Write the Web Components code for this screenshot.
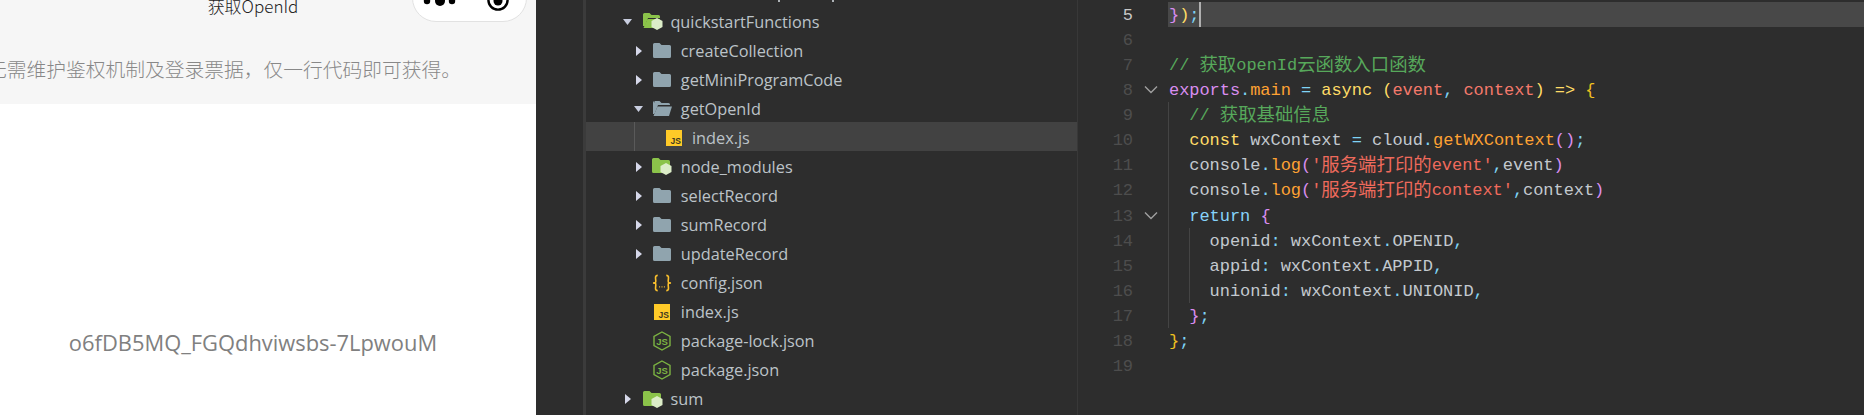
<!DOCTYPE html>
<html>
<head>
<meta charset="utf-8">
<style>
  html, body { margin: 0; padding: 0; width: 1864px; height: 415px; overflow: hidden; background: #2d2d2d; }
  .cm { color: #57a85b; }
  .pu { color: #d98df0; }
  .cy { color: #7fd4f5; }
  .or { color: #ffa233; }
  .ye { color: #ffdc66; }
  .re { color: #f4796b; }
  .st { color: #ef6a5c; }
  .tx { color: #c3c9cf; }
  .bl { color: #86d3fa; }
  .br { color: #f0c020; }
  .cn { font-family: "Noto Sans CJK SC", sans-serif; font-size: 18.4px; line-height: 0; letter-spacing: 0; vertical-align: -1px; }
</style>
</head>
<body>
<shot-root>
  <mini-preview></mini-preview>
  <file-tree>
    <tree-row cut></tree-row>
    <tree-row level="0" arrow="down" icon="node-open">quickstartFunctions</tree-row>
    <tree-row level="1" arrow="right" icon="folder">createCollection</tree-row>
    <tree-row level="1" arrow="right" icon="folder">getMiniProgramCode</tree-row>
    <tree-row level="1" arrow="down" icon="folder-open">getOpenId</tree-row>
    <tree-row level="2" icon="js" selected>index.js</tree-row>
    <tree-row level="1" arrow="right" icon="node">node_modules</tree-row>
    <tree-row level="1" arrow="right" icon="folder">selectRecord</tree-row>
    <tree-row level="1" arrow="right" icon="folder">sumRecord</tree-row>
    <tree-row level="1" arrow="right" icon="folder">updateRecord</tree-row>
    <tree-row level="1" icon="json">config.json</tree-row>
    <tree-row level="1" icon="js">index.js</tree-row>
    <tree-row level="1" icon="npm">package-lock.json</tree-row>
    <tree-row level="1" icon="npm">package.json</tree-row>
    <tree-row level="0" arrow="right" icon="node">sum</tree-row>
  </file-tree>
  <code-editor>
    <code-line n="5" current><span class="pu">}</span><span class="ye">)</span><span class="cy">;</span></code-line>
    <code-line n="6"></code-line>
    <code-line n="7"><span class="cm">// <span class="cn">获取</span>openId<span class="cn">云函数入口函数</span></span></code-line>
    <code-line n="8" fold><span class="pu">exports</span><span class="cy">.</span><span class="or">main</span> <span class="cy">=</span> <span class="ye">async</span> <span class="ye">(</span><span class="re">event</span><span class="cy">,</span> <span class="re">context</span><span class="ye">)</span> <span class="ye">=&gt;</span> <span class="br">{</span></code-line>
    <code-line n="9" guides="1">  <span class="cm">// <span class="cn">获取基础信息</span></span></code-line>
    <code-line n="10" guides="1">  <span class="ye">const</span> <span class="tx">wxContext</span> <span class="cy">=</span> <span class="tx">cloud</span><span class="cy">.</span><span class="or">getWXContext</span><span class="pu">()</span><span class="cy">;</span></code-line>
    <code-line n="11" guides="1">  <span class="tx">console</span><span class="cy">.</span><span class="or">log</span><span class="pu">(</span><span class="st">'<span class="cn">服务端打印的</span>event'</span><span class="cy">,</span><span class="tx">event</span><span class="pu">)</span></code-line>
    <code-line n="12" guides="1">  <span class="tx">console</span><span class="cy">.</span><span class="or">log</span><span class="pu">(</span><span class="st">'<span class="cn">服务端打印的</span>context'</span><span class="cy">,</span><span class="tx">context</span><span class="pu">)</span></code-line>
    <code-line n="13" guides="1" fold>  <span class="bl">return</span> <span class="pu">{</span></code-line>
    <code-line n="14" guides="2">    <span class="tx">openid</span><span class="cy">:</span> <span class="tx">wxContext</span><span class="cy">.</span><span class="tx">OPENID</span><span class="cy">,</span></code-line>
    <code-line n="15" guides="2">    <span class="tx">appid</span><span class="cy">:</span> <span class="tx">wxContext</span><span class="cy">.</span><span class="tx">APPID</span><span class="cy">,</span></code-line>
    <code-line n="16" guides="2">    <span class="tx">unionid</span><span class="cy">:</span> <span class="tx">wxContext</span><span class="cy">.</span><span class="tx">UNIONID</span><span class="cy">,</span></code-line>
    <code-line n="17" guides="1">  <span class="pu">}</span><span class="cy">;</span></code-line>
    <code-line n="18"><span class="br">}</span><span class="cy">;</span></code-line>
    <code-line n="19"></code-line>
  </code-editor>
</shot-root>

<script>
class ShotRoot extends HTMLElement {
  constructor() {
    super();
    this.attachShadow({ mode: 'open' }).innerHTML = `
      <style>
        :host { display: flex; width: 1864px; height: 415px; overflow: hidden; background: #2d2d2d; }
        ::slotted(mini-preview) { flex: 0 0 536px; }
      </style>
      <slot></slot>`;
  }
}

class MiniPreview extends HTMLElement {
  constructor() {
    super();
    this.attachShadow({ mode: 'open' }).innerHTML = `
      <style>
        :host { display: block; width: 536px; height: 415px; background: #fff; overflow: hidden;
                font-family: "Open Sans", "Noto Sans CJK SC", sans-serif; }
        .head { height: 104px; background: #f6f6f6; display: flex; flex-direction: column; }
        .nav { height: 22px; position: relative; display: flex; justify-content: center; padding-right: 30px; }
        .title { margin-top: -7px; height: 26px; line-height: 26px; font-size: 17px; color: #222;
                 font-family: "Noto Sans CJK SC", sans-serif; font-weight: 300; }
        .capsule { position: absolute; left: 412px; top: -30px; width: 115px; height: 52px; box-sizing: border-box;
                   background: #fff; border: 1px solid #e2e2e2; border-radius: 24px; }
        .capsule svg { position: absolute; left: -1px; top: 29px; }
        .desc { margin-top: 33px; padding-right: 75px; height: 28px; line-height: 28px; font-size: 19.75px; color: #888;
                display: flex; justify-content: flex-end; white-space: nowrap;
                font-family: "Noto Sans CJK SC", sans-serif; font-weight: 300; }
        .body { height: 311px; display: flex; justify-content: center; padding-right: 30px; }
        .openid { margin-top: 225px; height: 28px; line-height: 28px; font-size: 21.9px; color: #808080; white-space: nowrap; }
      </style>
      <div class="head">
        <div class="nav">
          <div class="title">获取OpenId</div>
          <div class="capsule">
            <svg width="115" height="22" viewBox="0 0 115 22">
              <circle cx="15" cy="1" r="3.2" fill="#000"/><circle cx="28" cy="1" r="5" fill="#000"/><circle cx="40" cy="1" r="3.2" fill="#000"/>
              <circle cx="86" cy="0" r="9.6" fill="none" stroke="#000" stroke-width="2.4"/><circle cx="86" cy="1" r="4.5" fill="#000"/>
            </svg>
          </div>
        </div>
        <div class="desc">无需维护鉴权机制及登录票据，仅一行代码即可获得。</div>
      </div>
      <div class="body"><div class="openid">o6fDB5MQ_FGQdhviwsbs-7LpwouM</div></div>`;
  }
}

class FileTree extends HTMLElement {
  constructor() {
    super();
    this.attachShadow({ mode: 'open' }).innerHTML = `
      <style>
        :host { display: flex; flex-direction: column; flex: 0 0 491px; height: 415px; margin-left: 47px; overflow: hidden;
                box-sizing: content-box; border-left: 3px solid #3b3b3b; border-right: 1px solid #383838;
                font-family: "Open Sans", "Noto Sans", sans-serif; }
      </style>
      <slot></slot>`;
  }
}

const TREE_ICONS = {
  folder: `<svg width="18" height="15" viewBox="0 0 18 15"><path d="M1.500 0h5l2 2h8a1.500 1.500 0 0 1 1.500 1.500v10a1.500 1.500 0 0 1-1.500 1.500h-15A1.500 1.500 0 0 1 0 13.500v-12A1.500 1.500 0 0 1 1.500 0z" fill="#90a4ae"/></svg>`,
  'folder-open': `<svg width="19" height="15" viewBox="0 0 19 15"><path d="M1.500 0h5l2 2h7a1.500 1.500 0 0 1 1.500 1.500V4H5L2 12H1V1.500A.5.5 0 0 0 1.500 0z" fill="#90a4ae"/><path d="M0 1.500A1.500 1.500 0 0 1 1.500 0V13H0z" fill="#90a4ae"/><path d="M4.500 5.500H19l-3 9.500H0.500z" fill="#90a4ae"/></svg>`,
  node: `<svg width="20" height="17" viewBox="0 0 20 17"><path d="M1.500 0h5l2 2h8a1.500 1.500 0 0 1 1.500 1.500v10a1.500 1.500 0 0 1-1.500 1.500h-15A1.500 1.500 0 0 1 0 13.500v-12A1.500 1.500 0 0 1 1.500 0z" fill="#8bc34a"/><path d="M14 5l5.500 3v6L14 17l-5.500-3V8z" fill="#dcedc8"/></svg>`,
  'node-open': `<svg width="20" height="17" viewBox="0 0 20 17"><path d="M1.500 0h5l2 2h7a1.500 1.500 0 0 1 1.500 1.500V5H5L2 13H0V1.500A1.500 1.500 0 0 1 1.500 0z" fill="#8bc34a"/><path d="M4.500 6H17l-3 9H0.500z" fill="#8bc34a"/><path d="M14 5l5.500 3v6L14 17l-5.500-3V8z" fill="#dcedc8"/></svg>`,
  js: `<svg width="16" height="16" viewBox="0 0 16 16"><rect width="16" height="16" fill="#ffca28"/><text x="15" y="14" text-anchor="end" font-family="Liberation Sans" font-size="8.500" font-weight="700" fill="#3e3a20">JS</text></svg>`,
  json: `<svg width="21" height="18" viewBox="0 0 21 18" fill="none" stroke="#fbc02d" stroke-width="1.700"><path d="M6 1C2.500 1 4 5 4 7S3.500 9 1 9c2.500 0 3 0 3 2s-1.500 6 2 6"/><path d="M15 1c3.500 0 2 4 2 6s.5 2 3 2c-2.500 0-3 0-3 2s1.500 6-2 6"/><path d="M7.500 13h1M10 13h1M12.500 13h1" stroke-width="1.300"/></svg>`,
  npm: `<svg width="18" height="20" viewBox="0 0 18 20"><path d="M9 1l8 4.500v9L9 19l-8-4.500v-9z" fill="none" stroke="#7cb342" stroke-width="1.400"/><text x="9" y="13.500" text-anchor="middle" font-family="Liberation Sans" font-size="9.500" font-weight="700" fill="#7cb342">JS</text></svg>`
};

class TreeRow extends HTMLElement {
  constructor() {
    super();
    this.attachShadow({ mode: 'open' });
  }

  connectedCallback() {
    if (this.hasAttribute('cut')) {
      // only the descenders of the row above are in the picture
      this.shadowRoot.innerHTML = `
        <style>
          :host { display: flex; height: 2px; flex: none; padding-left: 192px; gap: 52px; margin-bottom: 4px; }
          i { width: 2px; height: 2px; background: #aeb3b7; }
        </style><i></i><i></i>`;
      return;
    }
    const level = parseInt(this.getAttribute('level'), 10);
    const arrow = this.getAttribute('arrow');
    const icon = this.getAttribute('icon');
    const left = [37, 48, 61][level];
    const arrowWidth = [20, 18, 17][level];
    const iconGap = [7.4, 8.8, 8][level];
    const arrowSvg = arrow === 'down'
      ? `<svg width="10" height="8" viewBox="0 0 10 8"><path d="M0 1h9L4.500 7z" fill="#c9cee0"/></svg>`
      : `<svg width="10" height="10" viewBox="0 0 10 10"><path d="M2 0l6 5-6 5z" fill="#d6d8ea"/></svg>`;
    this.shadowRoot.innerHTML = `
      <style>
        :host { display: flex; flex: none; height: 29.05px; padding-top: 2px; align-items: center; box-sizing: border-box; position: relative;
                padding-left: ${left}px; font-size: 16.3px; color: #bcc3c8; white-space: nowrap; }
        :host([selected]) { background: #424242; }
        :host([selected])::before { content: ""; position: absolute; left: 48px; top: 0; bottom: 0; width: 1px; background: #5a5a5a; }
        .ar { width: ${arrowWidth}px; flex: none; display: flex; align-items: center; }
        .ic { width: 20px; flex: none; display: flex; align-items: center; justify-content: center; margin-right: ${iconGap}px; }
      </style>
      <span class="ar">${arrow ? arrowSvg : ''}</span>
      <span class="ic">${TREE_ICONS[icon]}</span>
      <slot></slot>`;
  }
}

class CodeEditor extends HTMLElement {
  constructor() {
    super();
    this.attachShadow({ mode: 'open' }).innerHTML = `
      <style>
        :host { display: flex; flex-direction: column; flex: 1; min-width: 0; height: 415px; padding-top: 2px; box-sizing: border-box; overflow: hidden;
                font-family: "Liberation Mono", "Noto Sans CJK SC", monospace; font-size: 17px; letter-spacing: -0.05px; }
      </style>
      <slot></slot>`;
  }
}

class CodeLine extends HTMLElement {
  constructor() {
    super();
    this.attachShadow({ mode: 'open' });
  }

  connectedCallback() {
    const n = this.getAttribute('n');
    const fold = this.hasAttribute('fold');
    this.shadowRoot.innerHTML = `
      <style>
        :host { display: flex; flex: none; height: 25.07px; line-height: 27px; white-space: pre; color: #c3c9cf; }
        .num { flex: 0 0 55px; text-align: right; color: #4d4d4d; }
        :host([current]) .num { color: #c8c8c8; }
        .fold { flex: 0 0 35px; display: flex; align-items: center; justify-content: center; }
        .code { flex: 1; min-width: 0; padding-left: 1px; box-sizing: border-box; }
        :host([current]) .code { background: #484848; }
        :host([current]) .code::after { content: ""; display: inline-block; width: 2px; height: 25px; vertical-align: top; background: #b0b0b0; }
        :host([guides="1"]) .code { background: linear-gradient(#444, #444) 0 0 / 1px 100% no-repeat; }
        :host([guides="2"]) .code { background: linear-gradient(#444, #444) 0 0 / 1px 100% no-repeat, linear-gradient(#444, #444) 21px 0 / 1px 100% no-repeat; }
      </style>
      <span class="num">${n}</span>
      <span class="fold">${fold ? `<svg width="14" height="9" viewBox="0 0 14 9"><path d="M1 1.500l6 6 6-6" fill="none" stroke="#a0a0a0" stroke-width="1.400"/></svg>` : ''}</span>
      <span class="code"><slot></slot></span>`;
  }
}

customElements.define('shot-root', ShotRoot);
customElements.define('mini-preview', MiniPreview);
customElements.define('file-tree', FileTree);
customElements.define('tree-row', TreeRow);
customElements.define('code-editor', CodeEditor);
customElements.define('code-line', CodeLine);
</script>
</body>
</html>
